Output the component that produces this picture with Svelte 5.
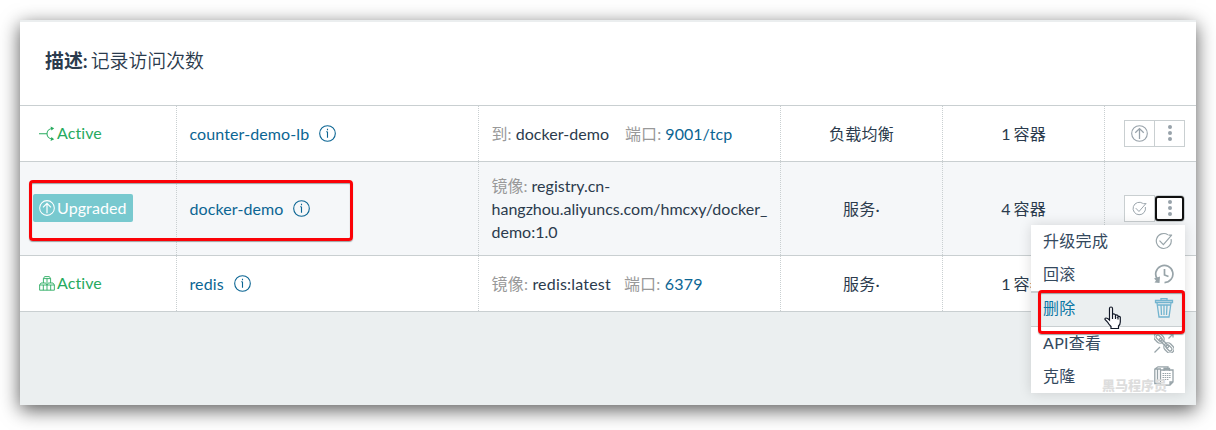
<script>
  const rows = [
    { state: 'Active', icon: 'fork', name: 'counter-demo-lb', parts: [['到:', 'docker-demo', false], ['端口:', '9001/tcp', true]], gap: 16, type: '负载均衡', count: 1, action: 'up' },
    { state: 'Upgraded', icon: 'up', name: 'docker-demo', image: true, type: '服务·', count: 4, action: 'check', open: true },
    { state: 'Active', icon: 'boxes', name: 'redis', parts: [['镜像:', 'redis:latest', false], ['端口:', '6379', true]], gap: 13, tracking: 0.2, type: '服务·', count: 1, action: 'up' }
  ];
  const items = [
    { label: '升级完成', icon: 'check' },
    { label: '回滚', icon: 'history' },
    { label: '删除', icon: 'trash', hover: true },
    { label: 'API查看', icon: 'link' },
    { label: '克隆', icon: 'copy' }
  ];
</script>

{#snippet icon(name, size)}
  <svg width={size} height={size} viewBox="0 0 20 20" fill="none" stroke="currentColor" stroke-width="1.3">
    {#if name === 'up'}
      <circle cx="10" cy="10" r="9.2" /><path stroke-width="1.500" d="M10 16.500V4.500M5 9.200 10 4.200 15 9.200" />
    {:else if name === 'info'}
      <circle cx="10" cy="10" r="9.2" /><path d="M10 8V15M8.500 8H10M10 4.500v1.800" />
    {:else if name === 'fork'}
      <path d="M0 11H10M16 4.500C12.500 5 10 8 10 11s2.500 6 6 6.500" /><path d="M14.500 1.800 19 4.200 15.500 7ZM14.500 20 19 17.800 15.500 15Z" fill="currentColor" stroke="none" />
    {:else if name === 'boxes'}
      <path stroke-width="1.100" d="M5.500 10V4.500L7 2H13L14.500 4.500V10M5.500 4.500H14.500M10 4.500V10M.8 19V12.500L2.500 10H8.500L10 12.500 11.500 10H17.500L19.200 12.500V19ZM.8 12.500H19.200M10 12.500V19M5.400 12.500V19M14.600 12.500V19" />
    {:else if name === 'check'}
      <path d="M17.800 8A8.300 8.300 0 1 1 14.500 3.200M5 9.500 9.300 14 18.500 3.500M15 3.500H19" />
    {:else if name === 'history'}
      <path stroke-width="1.700" d="M3.300 15A8.600 8.600 0 1 1 10.500 18.600M10.500 5V11L14.500 12.500" /><path fill="currentColor" stroke="none" d="M0 14.500 6 12.500 5.500 19 .5 18.500 2 16.500Z" />
    {:else if name === 'trash'}
      <path d="M1.500 4.500H18.500V2.500H1.500ZM7 2.500V.700H13V2.500M3 5 5 19H15L17 5M7 7 7.500 17M10 7V17M13 7 12.500 17M4 7H16" />
    {:else if name === 'link'}
      <g transform="rotate(45 10 10)"><rect x="-2.500" y="6" width="11" height="8" rx="4" /><rect x="11.500" y="6" width="11" height="8" rx="4" /><rect x="-.5" y="8.200" width="7" height="3.600" rx="1.800" /><rect x="13.500" y="8.200" width="7" height="3.600" rx="1.800" /><rect x="4" y="8.800" width="12" height="2.400" rx="1.200" /></g>
      <path d="M.5 19.500 6 14M14.500 5.500 19 1M15.500 1H19V4.500" />
    {:else}
      <path d="M6 17.500H.8V3L4 .800H14V3M.8 3H7M3.500 3V17M6.500 19.200V4H19V16L16 19.200ZM10 5V2.500H15.500V5M16 19V16H19" /><path stroke-width="1" stroke-dasharray="1.500 .700" d="M8.500 7.500H17M8.500 9.500H17M8.500 11.500H17M8.500 13.500H15" />
    {/if}
  </svg>
{/snippet}

<main>
  <section class="window">
    <header><b>描述:</b><span>记录访问次数</span></header>
    {#each rows as row}
      <div class="row" class:selected={row.open}>
        <div class="cell status"><span class="state" class:badge={row.open}>{@render icon(row.icon, 16)}<span>{row.state}</span></span></div>
        <div class="cell name"><span>{row.name}</span>{@render icon('info', 17)}</div>
        <div class="cell detail">
          {#if row.image}
            <p><i>镜像:</i> registry.cn-<br />hangzhou.aliyuncs.com/hmcxy/docker_<br />demo:1.0</p>
          {:else}
            <p class="parts" style:gap="{row.gap}px" style:letter-spacing="{row.tracking ?? 0.04}px">{#each row.parts as [key, value, link]}<span><i>{key}</i> <span class:link>{value}</span></span>{/each}</p>
          {/if}
        </div>
        <div class="cell center">{row.type}</div>
        <div class="cell center count">{row.count} 容器</div>
        <div class="cell actions">
          <div class="buttons">
            <button>{@render icon(row.action, row.open ? 15 : 17)}</button>
            <button class:focus={row.open} aria-label="menu"><span class="dots"></span></button>
          </div>
        </div>
      </div>
    {/each}
  </section>
  <nav class="menu">
    {#each items as item}
      <div class="item" class:hover={item.hover}><span>{item.label}</span>{@render icon(item.icon, item.icon === 'check' ? 18 : 20)}</div>
    {/each}
    <span class="mark">黑马程序员</span>
  </nav>
  <div class="box first"></div>
  <div class="box second"></div>
  <svg class="cursor" width="18" height="24" viewBox="0 0 18 24"><path d="M5.500 14V2.500Q5.500 1 7 1T8.500 2.500V9Q9 7.500 10.300 8T11.500 9.500Q12.500 8.500 13.500 9.200T14 10.700Q15.500 10 16.300 11.200V16Q16.300 18.500 14.500 20V22.500H7V20.500Q4.500 18 3.500 16L1 13.500Q.8 12 2 12Q3.500 12 5.500 14ZM8.500 9V13M11.500 9.500V13M14 10.700V13.500" fill="#fff" stroke="#111827" stroke-width="1.200" /></svg>
</main>

<style>
  :global(body) { background: #fff; }
  * { box-sizing: border-box; }
  main { position: relative; width: 1216px; height: 430px; padding: 20px; overflow: hidden; font: 16px/23px Lato, "Noto Sans CJK SC", sans-serif; color: #2b3b4d; }
  svg { display: block; flex: none; }
  .window { height: 385px; background: #ebeff0; border-top: 2px solid #ebeeef; box-shadow: 0 5px 18px rgba(0, 0, 0, .65); }
  header { height: 84px; display: flex; align-items: center; gap: 3px; padding: 0 0 7px 25px; border-bottom: 1px solid #c9cfd1; background: #fff; font-size: 18.900px; font-weight: 350; }
  header b { font-weight: 700; }
  .row { display: grid; grid-template-columns: 157px 302px 302px 162px 162px 91px; height: 56px; background: #fff; border-bottom: 1px solid #c9cfd1; }
  .selected { height: 94px; background: #f5f7f9; }
  .cell { display: flex; align-items: center; border-right: 1px dotted #c9cfd1; padding-left: 12.500px; }
  .cell:last-child { border-right: 0; }
  .center { justify-content: center; padding: 0; letter-spacing: .2px; }
  .count { word-spacing: -1.500px; }
  .name { color: #0b6593; gap: 10px; letter-spacing: .1px; }
  .status { padding: 0 0 1px 13px; }
  .state { display: flex; align-items: center; gap: 2px; padding: 0 6px; height: 28px; color: #27aa5e; letter-spacing: .1px; }
  .state > span { padding-bottom: 2px; }
  .badge { background: #78c9cf; color: #fff; border-radius: 2px; }
  p { margin: 0; }
  .parts { display: flex; }
  i { color: #999; font-style: normal; }
  .link { color: #0b6593; }
  .buttons { display: flex; }
  .actions { padding: 0 0 1px 19px; }
  button { width: 31px; height: 27px; padding: 0; display: flex; align-items: center; justify-content: center; background: #fff; border: 1px solid #c9cfd1; color: #98a2aa; }
  button + button { margin-left: -1px; }
  .dots { width: 4px; height: 4px; border-radius: 50%; background: currentColor; box-shadow: 0 -6px currentColor, 0 6px currentColor; }
  .focus { outline: 2px solid #101010; outline-offset: -3px; border-radius: 4px; }
  .menu { position: absolute; left: 1031px; top: 225px; width: 154px; height: 168px; background: #fff; box-shadow: 0 0 12px rgba(0, 0, 0, .14); }
  .item { display: flex; align-items: center; justify-content: space-between; height: 33px; padding: 0 11px 2px 12px; color: #34495e; letter-spacing: .3px; }
  .item svg { color: #98a4a9; }
  .item:first-child svg { margin-right: 1px; }
  .hover { height: 36px; padding-bottom: 4px; background: #ebeff0; border-top: 2px solid #c9cfd1; border-bottom: 1px solid #c9cfd1; color: #0b77a5; }
  .hover svg { color: #72b4cf; }
  .mark { position: absolute; left: 71px; top: 150px; font: 900 13px/20px "Noto Sans CJK SC", sans-serif; color: #ddd; }
  .box { position: absolute; border: 3px solid #fb0207; border-radius: 4px; box-shadow: 0 1px 1px #6669, inset 0 1px 1px #6669; }
  .first { left: 29px; top: 180px; width: 324px; height: 61px; }
  .second { left: 1038px; top: 290px; width: 147px; height: 44px; }
  .cursor { position: absolute; left: 1104px; top: 306px; }
</style>
